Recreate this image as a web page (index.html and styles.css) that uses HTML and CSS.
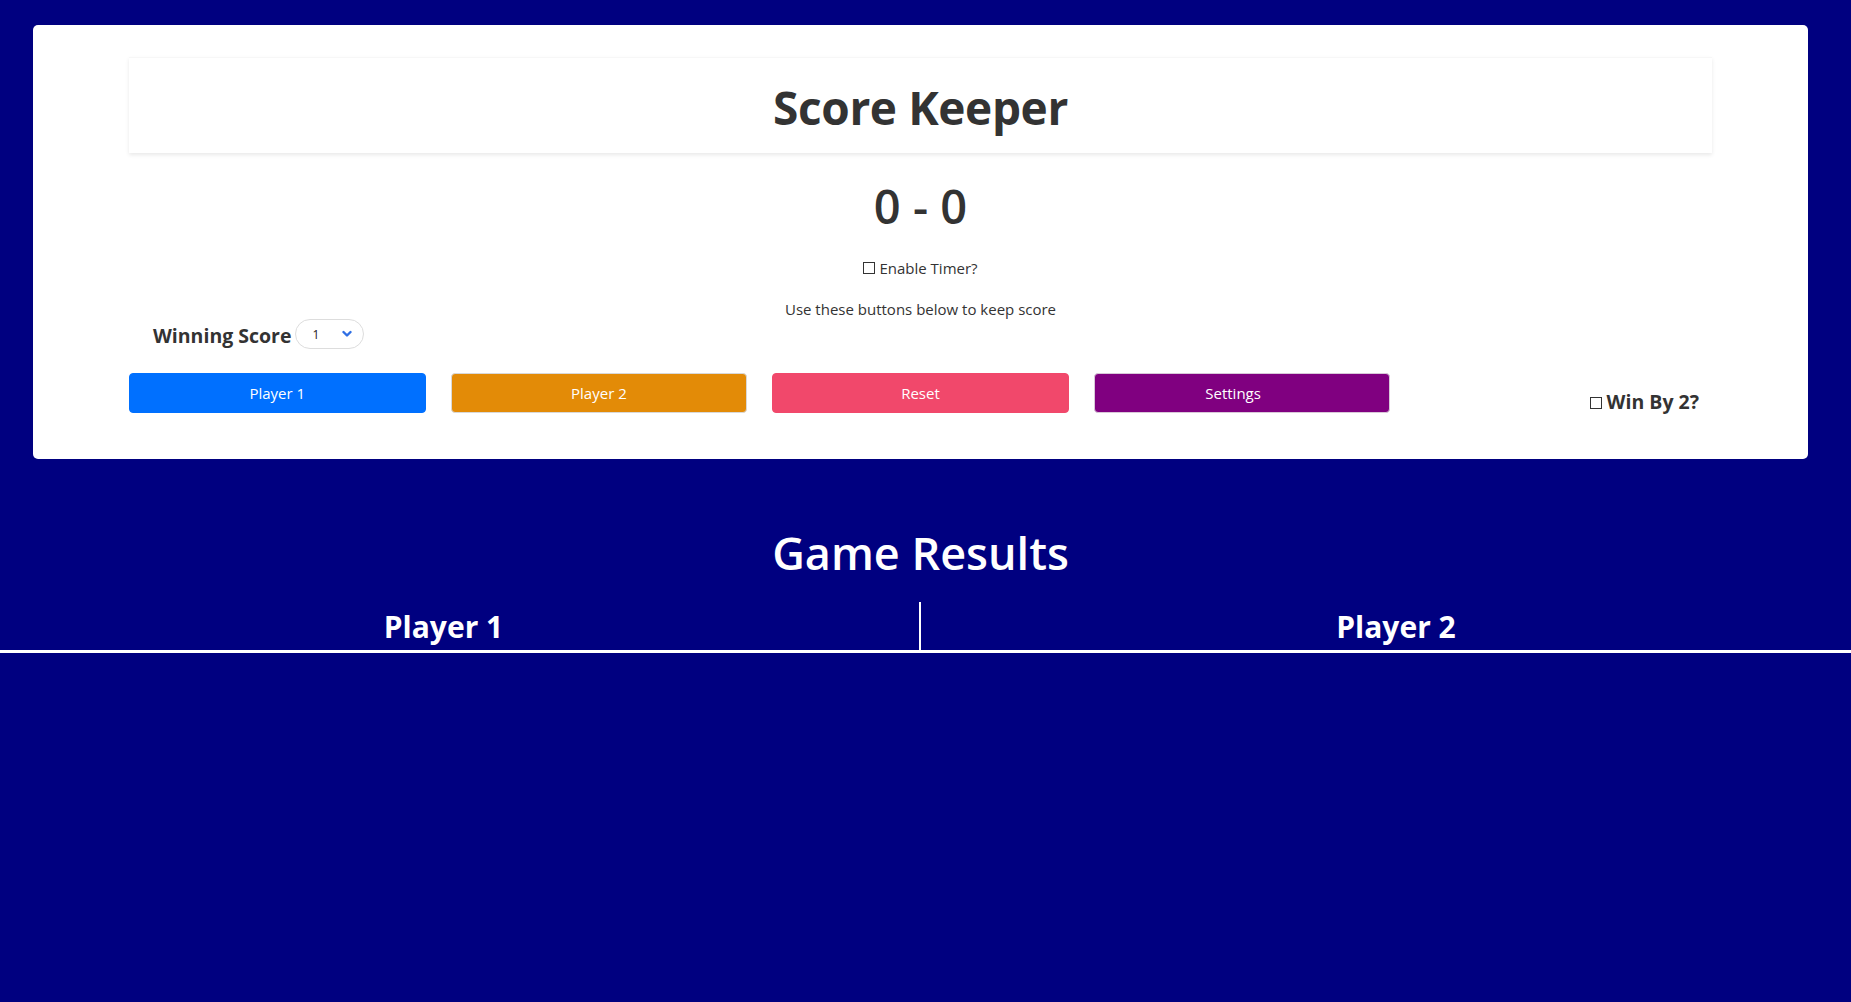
FILE: index.html
```html
<!DOCTYPE html>
<html lang="en">
<head>
<meta charset="utf-8">
<title>Score Keeper</title>
<link rel="stylesheet" href="styles.css">
</head>
<body>
<main class="card">
  <header class="header"><h1 class="title">Score Keeper</h1></header>
  <h2 class="score">0 - 0</h2>
  <label class="timer"><input type="checkbox" class="box">Enable Timer?</label>
  <p class="hint">Use these buttons below to keep score</p>
  <div class="winning">
    <span class="winning-label">Winning Score</span>
    <span class="select"><span class="select-value">1</span>
      <svg class="chev" width="10" height="8" viewBox="0 0 10 8"><path d="M1.5 2 L5 5.5 L8.5 2" fill="none" stroke="#2f6fe4" stroke-width="2.4" stroke-linecap="round" stroke-linejoin="round"/></svg>
    </span>
  </div>
  <div class="buttons">
    <button class="btn btn-p1">Player 1</button>
    <button class="btn btn-p2">Player 2</button>
    <button class="btn btn-reset">Reset</button>
    <button class="btn btn-settings">Settings</button>
    <label class="winby"><input type="checkbox" class="box">Win By 2?</label>
  </div>
</main>
<section class="results">
  <h2 class="results-title">Game Results</h2>
  <div class="results-head">
    <div class="col col-left">Player 1</div>
    <div class="col col-right">Player 2</div>
  </div>
</section>
</body>
</html>
```
FILE: styles.css
```css
html, body {
  margin: 0;
  padding: 0;
}
body {
  background: #000080;
  font-family: "Open Sans", "Noto Sans", sans-serif;
  color: #333;
  min-height: 1002px;
}
.card {
  margin: 25px 43px 0 33px;
  background: #fff;
  border-radius: 5px;
  padding: 32px 96px 46px;
  display: flex;
  flex-direction: column;
}
.header {
  height: 96px;
  box-shadow: 0 2px 4px rgba(0, 0, 0, 0.09);
  border-top: 1px solid #f7f7f7;
  box-sizing: border-box;
  text-align: center;
}
.title {
  margin: 0;
  font-size: 46px;
  font-weight: 700;
  line-height: 98px;
  color: #333;
  letter-spacing: -0.4px;
}
.score {
  margin: 25px 0 0;
  text-align: center;
  font-size: 47px;
  font-weight: 600;
  line-height: 57px;
  color: #333;
}
.timer {
  margin-top: 23px;
  display: flex;
  justify-content: center;
  align-items: center;
  font-size: 15px;
  line-height: 20px;
  gap: 2px;
}
.box {
  appearance: none;
  -webkit-appearance: none;
  width: 12px;
  height: 12px;
  border: 1px solid #333;
  margin: 0 2px 0 0;
  background: #fff;
  border-radius: 0;
}
.hint {
  margin: 21px 0 0;
  text-align: center;
  font-size: 15px;
  line-height: 20px;
}
.winning {
  margin-top: 0;
  padding-left: 24px;
  display: flex;
  align-items: center;
  height: 30px;
  gap: 3px;
}
.winning-label {
  font-size: 19.5px;
  font-weight: 700;
  line-height: 30px;
  position: relative;
  top: 2px;
}
.select {
  box-sizing: border-box;
  width: 69px;
  height: 30px;
  border: 1px solid #ddd;
  border-radius: 15px;
  display: flex;
  align-items: center;
  justify-content: space-between;
  padding: 0 11px 0 17px;
  font-size: 12px;
  color: #222;
}
.buttons {
  margin-top: 24px;
  display: grid;
  grid-template-columns: repeat(5, 1fr);
  column-gap: 25px;
  height: 40px;
}
.btn {
  font-family: inherit;
  font-size: 15px;
  color: #fff;
  border: 1px solid #ccc;
  border-radius: 4px;
  height: 40px;
  padding: 0;
  cursor: pointer;
}
.btn-p1 { background: #0070ff; border-color: #0070ff; }
.btn-p2 { background: #e38b07; border-color: #d8d8d8; }
.btn-reset { background: #f1486b; border-color: #f1486b; }
.btn-settings { background: #800080; border-color: #d8c8d8; padding-right: 18px; }
.winby {
  display: flex;
  align-items: flex-end;
  justify-content: flex-end;
  padding-right: 13px;
  font-size: 19.5px;
  font-weight: 700;
  line-height: 24px;
  margin-bottom: -1px;
}
.winby .box {
  margin-bottom: 5px;
  margin-right: 5px;
  margin-left: -2px;
}
.results {
  color: #fff;
}
.results-title {
  margin: 64px 0 0;
  padding-left: 33px;
  padding-right: 43px;
  text-align: center;
  font-size: 45px;
  font-weight: 600;
  line-height: 60px;
}
.results-head {
  margin-top: 19px;
  display: grid;
  grid-template-columns: 919px 1fr;
  border-bottom: 3px solid #fff;
}
.col {
  text-align: center;
  font-size: 30px;
  font-weight: 700;
  line-height: 48px;
  padding-top: 1px;
  box-sizing: border-box;
  height: 48px;
}
.col-left {
  padding-right: 32px;
}
.col-right {
  border-left: 2px solid #fff;
  padding-left: 20px;
}
```
